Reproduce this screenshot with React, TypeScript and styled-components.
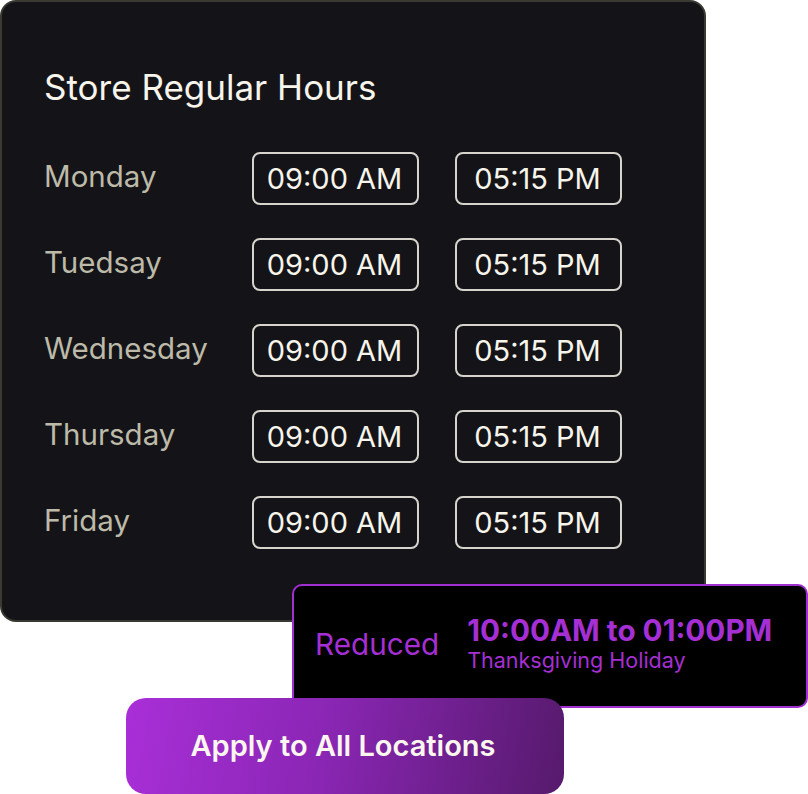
import styled, { createGlobalStyle } from "styled-components";

const GlobalStyle = createGlobalStyle`
  html, body {
    margin: 0;
    padding: 0;
    background: #ffffff;
  }
  body {
    font-family: Inter, "Noto Sans", "Liberation Sans", sans-serif;
  }
`;

const Page = styled.div`
  width: 808px;
  height: 794px;
  overflow: hidden;
  display: flex;
  flex-direction: column;
`;

const HoursCard = styled.section`
  box-sizing: border-box;
  width: 706px;
  height: 622px;
  background: #141418;
  border: 2px solid #3a3a32;
  border-radius: 16px;
  padding: 64px 0 0 42px;
`;

const Title = styled.h1`
  margin: 0 0 44px;
  font-size: 35px;
  font-weight: 400;
  line-height: 42px;
  color: #f7f4ec;
`;

const DayList = styled.div`
  display: flex;
  flex-direction: column;
  gap: 33px;
`;

const DayRow = styled.div`
  display: grid;
  grid-template-columns: 172px 167px 167px;
  column-gap: 36px;
  align-items: center;
`;

const DayName = styled.span`
  font-size: 29.5px;
  line-height: 36px;
  color: #bdbaa9;
  margin-top: -5px;
  white-space: nowrap;
`;

const TimeBox = styled.div`
  box-sizing: border-box;
  height: 53px;
  border: 2px solid #d6d4cc;
  border-radius: 8px;
  display: flex;
  align-items: center;
  justify-content: center;
  padding-right: 2px;
  font-size: 29px;
  color: #f7f4ec;
`;

const ReducedCard = styled.div`
  position: relative;
  z-index: 1;
  box-sizing: border-box;
  width: 516px;
  height: 124px;
  margin: -38px 0 0 292px;
  background: #000000;
  border: 2px solid #a22fd0;
  border-radius: 10px;
  display: flex;
  align-items: center;
  padding: 0 0 4px 21px;
  gap: 28px;
  color: #a52fd4;
`;

const ReducedLabel = styled.span`
  font-size: 29.7px;
  line-height: 36px;
`;

const ReducedInfo = styled.div`
  display: flex;
  flex-direction: column;
  margin-top: -2px;
`;

const ReducedTime = styled.span`
  font-size: 29.7px;
  font-weight: 700;
  line-height: 34px;
`;

const ReducedNote = styled.span`
  font-size: 21.5px;
  line-height: 26px;
`;

const ApplyButton = styled.button`
  position: relative;
  z-index: 2;
  box-sizing: border-box;
  width: 438px;
  height: 96px;
  margin: -10px 0 0 126px;
  border: none;
  border-radius: 20px;
  background: linear-gradient(100deg, #a92fd8 0%, #8a26b4 45%, #561a6c 100%);
  color: #fbf7ee;
  font-family: inherit;
  font-size: 29px;
  font-weight: 600;
  padding: 0 4px 2px 0;
  cursor: pointer;
`;

const days = ["Monday", "Tuedsay", "Wednesday", "Thursday", "Friday"];

export default function App() {
  return (
    <>
      <GlobalStyle />
      <Page>
        <HoursCard>
          <Title>Store Regular Hours</Title>
          <DayList>
            {days.map((day) => (
              <DayRow key={day}>
                <DayName>{day}</DayName>
                <TimeBox>09:00 AM</TimeBox>
                <TimeBox>05:15 PM</TimeBox>
              </DayRow>
            ))}
          </DayList>
        </HoursCard>
        <ReducedCard>
          <ReducedLabel>Reduced</ReducedLabel>
          <ReducedInfo>
            <ReducedTime>10:00AM to 01:00PM</ReducedTime>
            <ReducedNote>Thanksgiving Holiday</ReducedNote>
          </ReducedInfo>
        </ReducedCard>
        <ApplyButton>Apply to All Locations</ApplyButton>
      </Page>
    </>
  );
}
